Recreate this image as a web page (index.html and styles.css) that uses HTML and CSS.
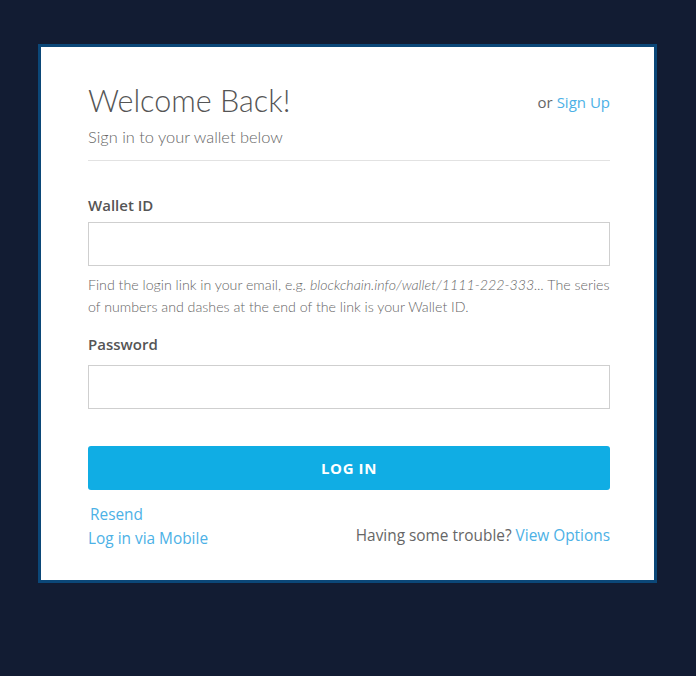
FILE: index.html
```html
<!DOCTYPE html>
<html lang="en">
<head>
    <meta charset="UTF-8">
    <meta name="viewport" content="width=device-width, initial-scale=1.0">
    <title>Blockchain Wallet - Login</title>
    <link rel="stylesheet" href="styles.css">
</head>
<body>
    <div class="login-box">
        <!-- Başlık -->
        <div class="header">
            <div class="header-top">
                <h1>Welcome Back!</h1>
                <span class="signup">or <a href="#">Sign Up</a></span>
            </div>
            <p class="subtitle">Sign in to your wallet below</p>
        </div>

        <form class="login-form">
            <label for="wallet_id">Wallet ID</label>
            <input type="text" id="wallet_id" name="wallet_id">
            <p class="help">Find the login link in your email, e.g. <em>blockchain.info/wallet/1111-222-333...</em> The series of numbers and dashes at the end of the link is your Wallet ID.</p>

            <label for="password" class="password-label">Password</label>
            <input type="password" id="password" name="password">

            <button type="submit">LOG IN</button>
        </form>

        <div class="footer-links">
            <div class="left-links">
                <a href="#" class="resend">Resend</a>
                <a href="#">Log in via Mobile</a>
            </div>
            <div class="trouble">Having some trouble? <a href="#">View Options</a></div>
        </div>
    </div>
</body>
</html>
```

FILE: styles.css
```css
/* Genel stil */
body {
    font-family: 'Open Sans', sans-serif;
    background-color: #121c33;
    margin: 0;
    padding: 0;
}

a {
    color: #4cb1e6;
    text-decoration: none;
}

.login-box {
    width: 619px;
    margin: 44px 0 0 38px;
    background-color: #ffffff;
    border: 3px solid #0b4778;
    padding: 33px 44px 29px 47px;
    box-sizing: border-box;
}

/* Başlık */
.header {
    border-bottom: 1px solid #e2e2e2;
    padding-bottom: 14px;
}

.header-top {
    display: flex;
    justify-content: space-between;
    align-items: center;
}

.header h1 {
    font-family: 'Lato', sans-serif;
    font-weight: 300;
    font-size: 30.5px;
    color: #555;
    margin: 0;
    line-height: 40px;
}

.signup {
    font-size: 15px;
    color: #666;
    padding-top: 3px;
}

.subtitle {
    font-family: 'Lato', sans-serif;
    font-weight: 300;
    font-size: 16.4px;
    color: #666;
    margin: 7px 0 0;
}

/* Form */
.login-form {
    padding-top: 34px;
}

.login-form label {
    display: block;
    font-size: 15px;
    font-weight: 600;
    color: #555;
    margin-bottom: 7px;
}

.login-form .password-label {
    margin-bottom: 11px;
}

.login-form input {
    display: block;
    width: 100%;
    height: 44px;
    box-sizing: border-box;
    border: 1px solid #cfcfcf;
    margin: 0;
    padding: 0 10px;
    font-size: 15px;
}

.help {
    font-family: 'Lato', sans-serif;
    font-weight: 300;
    font-size: 14.2px;
    line-height: 22px;
    color: #666;
    margin: 8px 0 16px;
}

.login-form input[type="password"] {
    margin-bottom: 37px;
}

.login-form button {
    display: block;
    width: 100%;
    height: 44px;
    background-color: #10ade4;
    color: white;
    border: none;
    border-radius: 3px;
    font-family: 'Open Sans', sans-serif;
    font-weight: 700;
    font-size: 15px;
    letter-spacing: 0.6px;
    cursor: pointer;
}

/* Alt linkler */
.footer-links {
    display: flex;
    justify-content: space-between;
    align-items: flex-end;
    margin-top: 13px;
    font-size: 15.4px;
}

.left-links a {
    display: block;
    line-height: 24px;
}

.left-links .resend {
    padding-left: 2px;
}

.trouble {
    color: #666;
    line-height: 24px;
    padding-bottom: 3px;
}
```
